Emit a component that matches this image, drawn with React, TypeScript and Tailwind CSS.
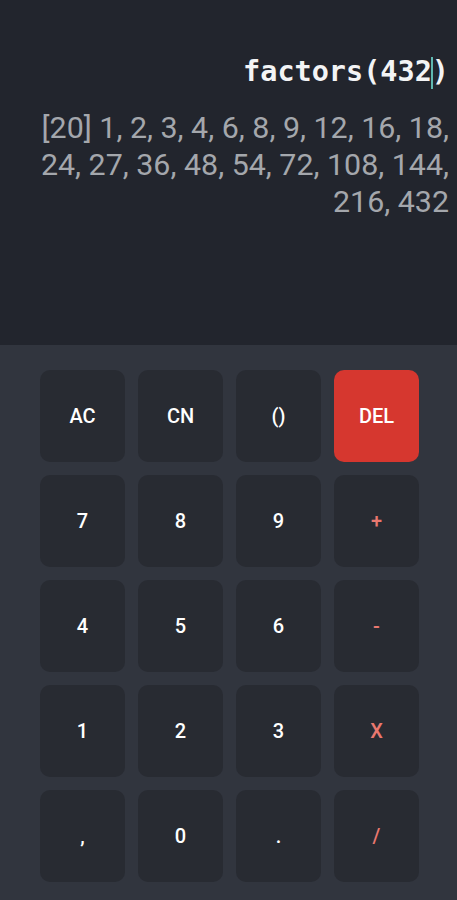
import React from "react";

const keys: { label: string; kind?: "op" | "del" }[] = [
  { label: "AC" },
  { label: "CN" },
  { label: "()" },
  { label: "DEL", kind: "del" },
  { label: "7" },
  { label: "8" },
  { label: "9" },
  { label: "+", kind: "op" },
  { label: "4" },
  { label: "5" },
  { label: "6" },
  { label: "-", kind: "op" },
  { label: "1" },
  { label: "2" },
  { label: "3" },
  { label: "X", kind: "op" },
  { label: "," },
  { label: "0" },
  { label: "." },
  { label: "/", kind: "op" },
];

export default function App() {
  return (
    <div className="w-[457px] h-[900px] flex flex-col bg-[#31353e] font-['Roboto',sans-serif]">
      {/* Display */}
      <div className="h-[345px] bg-[#22252d] flex flex-col items-end pr-2 pt-[54px]">
        <div className="font-['DejaVu_Sans_Mono',monospace] text-[28.5px] font-bold text-[#f3f4f5] leading-[36px]">
          factors(432<span className="inline-block w-[2px] h-[32px] bg-[#5fb8b0] align-middle -mx-[1px]"></span>)
        </div>
        <div className="mt-[19px] text-right text-[30.4px] leading-[37px] text-[#a4a7ac]">
          [20] 1, 2, 3, 4, 6, 8, 9, 12, 16, 18,
          <br />
          24, 27, 36, 48, 54, 72, 108, 144,
          <br />
          216, 432
        </div>
      </div>

      {/* Keypad */}
      <div className="grid grid-cols-[repeat(4,85px)] grid-rows-[repeat(5,92px)] gap-x-[13px] gap-y-[13px] pl-[40px] pt-[25px]">
        {keys.map((k) => (
          <button
            key={k.label}
            className={`rounded-[10px] flex items-center justify-center text-[20px] font-medium ${
              k.kind === "del"
                ? "bg-[#d6372f] text-white"
                : k.kind === "op"
                ? "bg-[#282b32] text-[#e9786f]"
                : "bg-[#282b32] text-white"
            }`}
          >
            {k.label}
          </button>
        ))}
      </div>
    </div>
  );
}
